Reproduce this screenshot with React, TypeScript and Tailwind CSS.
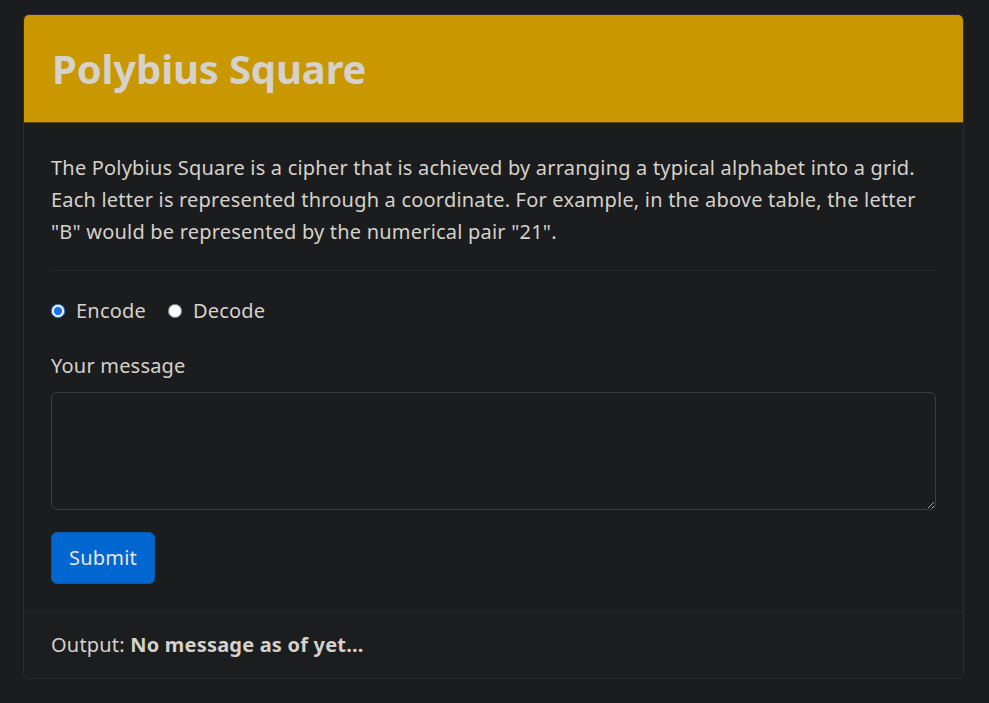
import React, { useState } from 'react';

export default function App() {
  const [mode, setMode] = useState('encode');
  const [message, setMessage] = useState('');

  return (
    <div className="min-h-screen bg-[#1b1c1e] pt-[14px] pl-[23px] font-['Noto_Sans',sans-serif] text-[#d5d1cb]">
      <div className="w-[941px] rounded-[6px] border border-[#2a2d2f] overflow-hidden bg-[#1b1c1e]">
        <div className="h-[108px] bg-[#c99700] border-b border-[#5c4a10] px-[28px] flex items-center">
          <h1 className="text-[40px] font-bold tracking-[-0.15px] text-[#d5d1cb] leading-none">Polybius Square</h1>
        </div>

        <div className="px-[27px] pt-[29px] pb-[27px] tracking-[0.2px]">
          <p className="text-[20px] leading-[32px]">
            The Polybius Square is a cipher that is achieved by arranging a typical alphabet into a grid.
            Each letter is represented through a coordinate. For example, in the above table, the letter
            "B" would be represented by the numerical pair "21".
          </p>
          <div className="mt-[22px] border-t border-[#26292b]" />

          <div className="mt-[25px] flex items-center gap-[22px] text-[20px] leading-[30px]">
            <label className="flex items-center gap-[11px]">
              <input
                type="radio"
                name="mode"
                checked={mode === 'encode'}
                onChange={() => setMode('encode')}
                className="w-[14px] h-[14px] accent-[#1a73e8]"
              />
              Encode
            </label>
            <label className="flex items-center gap-[11px]">
              <input
                type="radio"
                name="mode"
                checked={mode === 'decode'}
                onChange={() => setMode('decode')}
                className="w-[14px] h-[14px] accent-[#1a73e8]"
              />
              Decode
            </label>
          </div>

          <div className="mt-[25px] text-[20px] leading-[30px]">Your message</div>
          <textarea
            value={message}
            onChange={(e) => setMessage(e.target.value)}
            className="mt-[11px] block w-[885px] h-[118px] rounded-[6px] border border-[#3a3e41] bg-[#1b1c1e] px-3 py-2 text-[20px] text-[#d5d1cb] outline-none"
          />

          <button className="mt-[22px] h-[52px] px-[17px] rounded-[6px] bg-[#0066d0] border border-[#0a58b0] text-[20px] text-[#e8e6e3] tracking-[0.2px]">
            Submit
          </button>
        </div>

        <div className="h-[67px] border-t border-[#232628] bg-[#1c1d1f] px-[27px] flex items-center text-[20px] tracking-[0.2px]">
          <span>Output:&nbsp;</span>
          <strong className="font-bold">No message as of yet...</strong>
        </div>
      </div>
    </div>
  );
}
